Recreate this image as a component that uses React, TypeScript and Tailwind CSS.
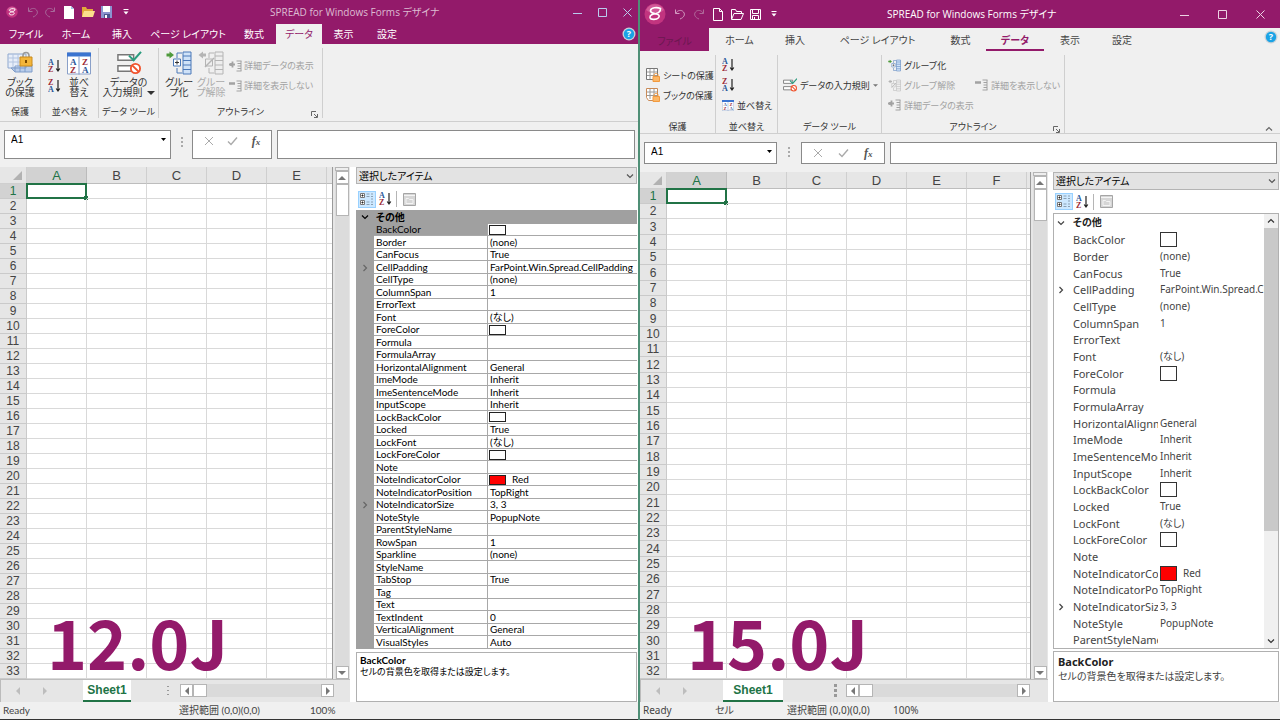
import type { ReactNode } from 'react';
import clsx from 'clsx';

type Property = { name: string; value?: string; color?: string; expandable?: boolean };

const properties: Property[] = [
  { name: 'BackColor', color: '#ffffff' },
  { name: 'Border', value: '(none)' },
  { name: 'CanFocus', value: 'True' },
  { name: 'CellPadding', value: 'FarPoint.Win.Spread.CellPadding', expandable: true },
  { name: 'CellType', value: '(none)' },
  { name: 'ColumnSpan', value: '1' },
  { name: 'ErrorText' },
  { name: 'Font', value: '(なし)' },
  { name: 'ForeColor', color: '#ffffff' },
  { name: 'Formula' },
  { name: 'FormulaArray' },
  { name: 'HorizontalAlignment', value: 'General' },
  { name: 'ImeMode', value: 'Inherit' },
  { name: 'ImeSentenceMode', value: 'Inherit' },
  { name: 'InputScope', value: 'Inherit' },
  { name: 'LockBackColor', color: '#ffffff' },
  { name: 'Locked', value: 'True' },
  { name: 'LockFont', value: '(なし)' },
  { name: 'LockForeColor', color: '#ffffff' },
  { name: 'Note' },
  { name: 'NoteIndicatorColor', value: 'Red', color: '#ff0000' },
  { name: 'NoteIndicatorPosition', value: 'TopRight' },
  { name: 'NoteIndicatorSize', value: '3, 3', expandable: true },
  { name: 'NoteStyle', value: 'PopupNote' },
  { name: 'ParentStyleName' },
  { name: 'RowSpan', value: '1' },
  { name: 'Sparkline', value: '(none)' },
  { name: 'StyleName' },
  { name: 'TabStop', value: 'True' },
  { name: 'Tag' },
  { name: 'Text' },
  { name: 'TextIndent', value: '0' },
  { name: 'VerticalAlignment', value: 'General' },
  { name: 'VisualStyles', value: 'Auto' },
];

/* ---------- icons ---------- */

function Logo({ className }: { className: string }) {
  return (
    <svg className={className} viewBox="0 0 22 22" fill="none">
      <circle cx="11" cy="11" r="10.5" fill="#c2347f" />
      <path d="M2 7a10 10 0 0 1 18 0c-5 4-12 5-18 0Z" fill="#d76aa3" opacity=".7" />
      <path
        d="M16.500 5.500C13 4 7 4.500 6.500 7.500c-.3 2.500 3 3 6 3.500 2.500.5 3.500 2 2 3.800-2 2.200-8 2.200-8.500-.3-.4-2.300 3-3.500 6-4 2.500-.5 4.500-2 4.500-5Z"
        stroke="#fff"
        strokeWidth="1.6"
      />
    </svg>
  );
}

function UndoIcon({ redo, className }: { redo?: boolean; className: string }) {
  return (
    <svg className={clsx('h-3 w-3', className)} viewBox="0 0 12 12" fill="none" stroke="currentColor">
      {redo ? (
        <path d="M10.500 1.500v4h-4M10.200 5.300C8.500 2 4.500 1.500 2.500 4s-.5 5.500 3.500 7" />
      ) : (
        <path d="M1.500 1.500v4h4M1.800 5.300C3.500 2 7.500 1.500 9.500 4s.5 5.500-3.500 7" />
      )}
    </svg>
  );
}

function MenuCaret({ className }: { className: string }) {
  return (
    <svg className={className} width="6" height="6" viewBox="0 0 6 6" fill="currentColor">
      <path d="M0.500 0h5v1h-5zM0.500 2.500h5L3 5.500z" />
    </svg>
  );
}

function SortIcon({ desc }: { desc?: boolean }) {
  return (
    <svg className="h-[14px] w-[13px] shrink-0" viewBox="0 0 13 14">
      <g fontFamily="Liberation Serif, serif" fontSize="8" fontWeight="700">
        <text x="0" y="6" fill={desc ? '#9c2a35' : '#2a5699'}>{desc ? 'Z' : 'A'}</text>
        <text x="0" y="13" fill={desc ? '#2a5699' : '#9c2a35'}>{desc ? 'A' : 'Z'}</text>
      </g>
      <path d="M10 1v10.500M8.200 9.500 10 12l1.800-2.500" stroke="#222" strokeWidth="1.200" fill="none" />
    </svg>
  );
}

function SortDialogIcon({ className }: { className: string }) {
  return (
    <svg className={clsx('shrink-0', className)} viewBox="0 0 24 22">
      <path d="M.5.5h23v21H.5z" fill="#fff" stroke="#8aa0c8" />
      <path d="M0 0h24v4H0z" fill="#3b74d0" />
      <path d="M12 4v18" stroke="#7c98c8" />
      <g fontFamily="Liberation Serif, serif" fontSize="9" fontWeight="700">
        <text x="3" y="12" fill="#2a5699">A</text>
        <text x="3" y="20" fill="#9c2a35">Z</text>
        <text x="15" y="12" fill="#9c2a35">Z</text>
        <text x="15" y="20" fill="#2a5699">A</text>
      </g>
    </svg>
  );
}

function BookLockIcon() {
  return (
    <svg className="h-6 w-7" viewBox="0 0 28 24" fill="none">
      <path d="M2 3h18v14H2z" fill="#e7eef9" stroke="#8fa8cf" />
      <path d="M2 7h18M2 11h18M7 3v14M12 3v14" stroke="#b3c4e0" />
      <path d="M5 17l4 4h17v-8H20v4z" fill="#b9cdea" stroke="#7f9cc9" />
      <path d="M9 21v-6h17M14 15v6M19 15v6" stroke="#7f9cc9" />
      <path d="M17 7V4.500c0-4 6-4 6 0V7" stroke="#9a9a9a" strokeWidth="1.600" />
      <path d="M14 6h12v9H14z" fill="#f3b53a" stroke="#c98a1d" />
      <path d="M20 9v3" stroke="#7a4a00" strokeWidth="2" />
    </svg>
  );
}

function SheetLockIcon({ book }: { book?: boolean }) {
  return (
    <svg className="h-[14px] w-[14px] shrink-0" viewBox="0 0 14 14" fill="none">
      <path d={book ? 'M.5.5h11v9l-2 3h-7l-2-3z' : 'M.5.500h11v11H.5z'} fill="#fff" stroke={book ? '#c98b58' : '#777'} />
      <path d="M1 4h10M1 7.500h10M4 1v10M8 1v10" stroke="#999" />
      <path d="M8 8.500V7c0-2 4-2 4 0v1.500" stroke="#f29a3f" />
      <path d="M7 8.500h6.500v5H7z" fill="#fbb768" stroke="#f29a3f" />
    </svg>
  );
}

function ValidationIcon({ className }: { className: string }) {
  return (
    <svg className={clsx('shrink-0', className)} viewBox="0 0 26 26" fill="none">
      <path d="M1 4h17v6H1zM1 16h15v6H1z" fill="#fff" stroke="#777" strokeWidth="1.600" />
      <path d="M13 5l5 5 8-9" stroke="#2a9c7e" strokeWidth="2.200" />
      <circle cx="20" cy="19" r="5" fill="#fff" stroke="#f0532d" strokeWidth="2" />
      <path d="M16.500 15.500l7 7" stroke="#f0532d" strokeWidth="2" />
    </svg>
  );
}

function GroupIcon({ ungroup, className }: { ungroup?: boolean; className: string }) {
  const line = ungroup ? '#b4b4b4' : '#4a78b8';
  return (
    <svg className={clsx('shrink-0', className)} viewBox="0 0 26 24" fill="none">
      <path d="M17 1h8v22h-8zM17 5h8M17 9.500h8M17 14h8M17 18.500h8" fill={ungroup ? '#eee' : '#cfe2f8'} stroke={line} />
      <path d="M16 2h-5v5M16 22h-5v-5" stroke={line} />
      <path d="M7.500 8h7v7h-7z" fill={ungroup ? '#eee' : '#fff'} stroke={line} />
      {ungroup ? <path d="M7 16l9-9" stroke={line} strokeWidth="1.500" /> : <path d="M11 9.500v4M9 11.500h4" stroke="#333" />}
      {ungroup ? (
        <path d="M8 2.500H5V.500L.5 4 5 7.500v-2h3z" fill="#b4b4b4" />
      ) : (
        <path d="M.5 2.500h3V.500L8 4 3.500 7.500v-2h-3z" fill="#4f9a3c" />
      )}
    </svg>
  );
}

function DetailIcon({ hide }: { hide?: boolean }) {
  return (
    <svg className="h-3 w-[13px] shrink-0" viewBox="0 0 13 12" fill="none" stroke="#a2a2a2">
      <path d="M7.500 1h5M8.500 3.500h3.500M8.500 6h3.500M8.500 8.500h3.500M7.500 11h5M12 1v10" />
      {hide ? <path d="M0 3.500h6" strokeWidth="2.500" /> : <path d="M0 4.500h6M3.500 1.500v6M2 3v3" strokeWidth="1.800" />}
    </svg>
  );
}

function LauncherIcon() {
  return (
    <svg className="h-[7px] w-[7px]" viewBox="0 0 7 7" fill="none" stroke="#666">
      <path d="M.5 5V.500H5M3 3l3 3M6.500 3v3.500H3" />
    </svg>
  );
}

function HelpIcon() {
  return (
    <svg className="h-[14px] w-[14px]" viewBox="0 0 14 14">
      <circle cx="7" cy="7" r="6.500" fill="#c9d2d8" />
      <circle cx="7" cy="7" r="5.200" fill="#1aa3e6" />
      <text x="7" y="10.300" fontSize="9" fontWeight="700" fill="#fff" textAnchor="middle" fontFamily="Open Sans, sans-serif">?</text>
    </svg>
  );
}

function WindowControls({ className, gap }: { className: string; gap: string }) {
  return (
    <div className={clsx('flex items-center', className, gap)}>
      <button aria-label="最小化">
        <svg width="9" height="9" viewBox="0 0 9 9" stroke="currentColor"><path d="M0 5.500h9" /></svg>
      </button>
      <button aria-label="最大化">
        <svg width="9" height="9" viewBox="0 0 9 9" fill="none" stroke="currentColor"><path d="M.5.500h8v8h-8z" /></svg>
      </button>
      <button aria-label="閉じる">
        <svg width="9" height="9" viewBox="0 0 9 9" stroke="currentColor"><path d="M.5.500l8 8M8.500.500l-8 8" /></svg>
      </button>
    </div>
  );
}

function Chevron({ dir, className }: { dir: 'down' | 'right' | 'up'; className?: string }) {
  const d = { down: 'M1 2.500l3 3 3-3', right: 'M2.500 1l3 3-3 3', up: 'M1 5.500l3-3 3 3' }[dir];
  return (
    <svg className={clsx('h-2 w-2', className)} viewBox="0 0 8 8" fill="none" stroke="currentColor" strokeWidth="1.200">
      <path d={d} />
    </svg>
  );
}

function Triangle({ dir, className }: { dir: 'up' | 'down' | 'left' | 'right'; className?: string }) {
  const d = { up: 'M0 6l4-4 4 4z', down: 'M0 2l4 4 4-4z', left: 'M6 0L2 4l4 4z', right: 'M2 0l4 4-4 4z' }[dir];
  return (
    <svg className={clsx('h-2 w-2', className)} viewBox="0 0 8 8" fill="currentColor">
      <path d={d} />
    </svg>
  );
}

/* ---------- shared parts ---------- */

function RibbonGroup({ label, width, launcher, children }: { label: string; width: string; launcher?: boolean; children: ReactNode }) {
  return (
    <section className={clsx('relative flex flex-col border-r border-[#cfcfcf]', width)}>
      <div className="flex-1">{children}</div>
      <h3 className="text-center text-[9px] leading-3 text-[#333]">{label}</h3>
      {launcher && (
        <button aria-label="オプション" className="absolute right-1 bottom-0">
          <LauncherIcon />
        </button>
      )}
    </section>
  );
}

type FormulaBarProps = { className: string; boxHeight: string; nameWidth: string; dots: string; tools: string };

function FormulaBar({ className, boxHeight, nameWidth, dots, tools }: FormulaBarProps) {
  const box = 'border border-[#8a8a8a] bg-white';
  return (
    <div className={clsx('flex items-start pr-[3px] pl-1', className)}>
      <div className={clsx('flex items-start px-1', box, boxHeight, nameWidth)}>
        <input aria-label="名前ボックス" defaultValue="A1" className="h-4 w-full min-w-0 pl-0.5 font-['Liberation_Sans',sans-serif] text-[10px] text-black outline-none" />
        <button aria-label="一覧" className="flex h-4 items-center">
          <svg width="5" height="3" viewBox="0 0 5 3"><path d="M0 0h5L2.500 3z" /></svg>
        </button>
      </div>
      <div className={clsx('flex items-center justify-center text-[#aaa]', dots)}>
        <svg width="2" height="12" viewBox="0 0 2 12" fill="currentColor"><path d="M0 1h2v2H0zM0 5h2v2H0zM0 9h2v2H0z" /></svg>
      </div>
      <div className={clsx('flex items-start justify-around px-1 pt-1', box, boxHeight, tools)}>
        <button aria-label="キャンセル" className="text-[#aaa]">
          <svg width="10" height="12" viewBox="0 0 10 12" stroke="currentColor"><path d="M1 2l8 8M9 2l-8 8" /></svg>
        </button>
        <button aria-label="入力" className="text-[#aaa]">
          <svg width="11" height="12" viewBox="0 0 11 12" fill="none" stroke="currentColor" strokeWidth="1.400"><path d="M1 6.500l3 3 6-7" /></svg>
        </button>
        <button aria-label="関数の挿入" className="font-['Liberation_Serif',serif] text-[12px] leading-3 font-bold text-[#555] italic">
          f<span className="text-[9px]">x</span>
        </button>
      </div>
      <input aria-label="数式バー" className={clsx('ml-[5px] min-w-0 flex-1 outline-none', box, boxHeight)} />
    </div>
  );
}

function Sheet({ columns, rows, rowHeights, caption }: { columns: string[]; rows: number; rowHeights: string; caption: string }) {
  return (
    <div className="relative min-w-0 flex-1 border-r border-[#9a9a9a] bg-white">
      <table className="w-full table-fixed border-separate border-spacing-0 font-['Liberation_Sans',sans-serif] leading-none text-[#444]">
        <colgroup>
          <col className="w-[27px]" />
          {columns.map((c) => (
            <col key={c} className="w-[60px]" />
          ))}
          <col />
        </colgroup>
        <thead>
          <tr className="h-[17px] bg-[#e6e6e6]">
            <th className="border-r border-b border-[#cfcfcf] p-0">
              <svg className="mr-1 ml-auto h-[9px] w-[9px]" viewBox="0 0 9 9" fill="#b2b2b2"><path d="M9 0v9H0z" /></svg>
            </th>
            {columns.map((c, i) => (
              <th
                key={c}
                className={clsx('border-r border-b p-0 text-[13px] font-normal', i === 0 ? 'border-[#217346] border-r-[#bbb] bg-[#d2d2d2] text-[#217346]' : 'border-[#bdbdbd] border-r-[#cfcfcf]')}
              >
                {c}
              </th>
            ))}
            <th className="border-b border-[#bdbdbd] p-0" />
          </tr>
        </thead>
        <tbody className={rowHeights}>
          {Array.from({ length: rows }, (_, r) => (
            <tr key={r}>
              <th className={clsx('border-r border-b border-[#cacaca] p-0 text-[12px] font-normal', r === 0 ? 'bg-[#d2d2d2] text-[#217346]' : 'bg-[#e6e6e6]')}>
                {r + 1}
              </th>
              {columns.map((c, i) => (
                <td key={c} className="relative border-r border-b border-[#d9d9d9] p-0">
                  {r === 0 && i === 0 && (
                    <div className="absolute -inset-px border-2 border-[#217346]">
                      <span className="absolute -right-[3px] -bottom-[3px] h-1 w-1 bg-[#217346]" />
                    </div>
                  )}
                </td>
              ))}
              <td className="border-b border-[#d9d9d9] p-0" />
            </tr>
          ))}
        </tbody>
      </table>
      <p className="absolute bottom-1 left-[47px] font-['Noto_Sans_CJK_JP',sans-serif] text-[68px] leading-none font-bold text-[#931a6a]">
        {caption}
      </p>
    </div>
  );
}

const scrollButton = 'flex h-[13px] w-[13px] shrink-0 items-center justify-center border border-[#b5b5b5] bg-white text-[#777]';

function VerticalScroll() {
  return (
    <div className="mr-px ml-0.5 flex w-[14px] flex-col items-center bg-[#dcdcdc]">
      <div className="h-1 w-full border border-[#b5b5b5] bg-[#eee]" />
      <button aria-label="上へ" className={scrollButton}><Triangle dir="up" className="h-1.5" /></button>
      <div className="h-8 w-[13px] border border-[#b5b5b5] bg-white" />
      <button aria-label="下へ" className={clsx('mt-auto', scrollButton)}><Triangle dir="down" className="h-1.5" /></button>
    </div>
  );
}

function SheetTabs({ tabWidth, dots, className }: { tabWidth: string; dots: ReactNode; className: string }) {
  return (
    <div className="flex h-[23px] items-start border-t border-[#bdbdbd] bg-[#e6e6e6]">
      <div className="flex h-full w-[83px] items-center gap-[19px] border-l border-[#bbb] pl-[13px] text-[#bdbdbd]">
        <button aria-label="前のシート"><Triangle dir="left" /></button>
        <button aria-label="次のシート"><Triangle dir="right" /></button>
      </div>
      <button className={clsx("h-[22px] border-b-2 border-[#217346] bg-white font-['Liberation_Sans',sans-serif] text-[12px] font-bold text-[#217346]", tabWidth)}>
        Sheet1
      </button>
      {dots}
      <div className={clsx('mt-1 flex flex-1 bg-[#dadada]', className)}>
        <button aria-label="左へ" className={scrollButton}><Triangle dir="left" /></button>
        <div className="h-[13px] w-[14px] border border-[#b5b5b5] bg-white" />
        <button aria-label="右へ" className={clsx('ml-auto', scrollButton)}><Triangle dir="right" /></button>
      </div>
    </div>
  );
}

function ItemSelect({ height }: { height: string }) {
  return (
    <div className={clsx('relative', height)}>
      <select aria-label="アイテム" className={clsx('block w-full appearance-none border border-[#b4b4b4] bg-[#e3e3e3] pl-0.5 text-[10px] leading-none text-black', height)}>
        <option>選択したアイテム</option>
      </select>
      <Chevron dir="down" className="pointer-events-none absolute top-[5px] right-[3px] text-[#555]" />
    </div>
  );
}

function PropertyToolbar({ className }: { className: string }) {
  return (
    <div className={clsx('flex items-center pl-0.5', className)}>
      <button aria-label="項目別" className="flex h-[17px] w-[18px] items-center justify-center border border-[#99d1ff] bg-[#cce8ff]">
        <svg width="14" height="13" viewBox="0 0 14 13" fill="none" stroke="#777">
          <path d="M.5.500h4v4h-4zM.5 7.500h4v4h-4z" fill="#fff" />
          <path d="M1.500 2.500h2M1.500 9.500h2M2.500 1.500v2M2.500 8.500v2" stroke="#222" />
          <path d="M6.500 1h3M6.500 3.500h3M6.500 9h3M6.500 11.500h3M11 1h2M11 3.500h2M11 6h2M11 9h2M11 11.500h2" stroke="#8aa0b4" />
        </svg>
      </button>
      <button aria-label="アルファベット順" className="ml-[3px]"><SortIcon /></button>
      <div className="ml-1 h-4 w-px bg-[#b5b5b5]" />
      <button aria-label="プロパティ ページ" className="ml-1.5" disabled>
        <svg width="13" height="13" viewBox="0 0 13 13" fill="none" stroke="#a5a5a5">
          <path d="M.5.500h12v12H.5z" fill="#d6d6d6" />
          <path d="M1 2.500h11M3 5.500h2.500l1 1H10v4H3z" stroke="#f4f4f4" />
        </svg>
      </button>
    </div>
  );
}

/* ---------- version 12 ---------- */

const classicTabs = [
  ['ファイル', 'w-[52px]'],
  ['ホーム', 'w-12'],
  ['挿入', 'w-11'],
  ['ページ レイアウト', 'w-[88px]'],
  ['数式', 'w-11'],
  ['データ', 'w-[46px]'],
  ['表示', 'w-[43px]'],
  ['設定', 'w-11'],
];

function ClassicWindow() {
  const big = 'flex flex-col items-center gap-0.5 text-center text-[10px] leading-[10px] text-[#333]';
  return (
    <main className="flex min-w-0 flex-col border-r-2 border-[#4f8f76] bg-[#f0f0f0] font-[Lato,'Noto_Sans_CJK_JP',sans-serif] [font-variant-ligatures:no-common-ligatures]">
      <header className="bg-[#931a6a] text-white">
        <div className="relative flex h-6 items-center pl-1.5">
          <Logo className="h-3 w-3" />
          <button aria-label="元に戻す" className="ml-[9px]"><UndoIcon className="text-[#a8699a]" /></button>
          <button aria-label="やり直し" className="ml-[5px]"><UndoIcon redo className="text-[#a8699a]" /></button>
          <button aria-label="新規" className="ml-2">
            <svg width="10" height="13" viewBox="0 0 10 13" fill="#fff"><path d="M0 0h7l3 3v10H0z" /><path d="M7 0v3h3z" fill="#9fc6e8" /></svg>
          </button>
          <button aria-label="開く" className="ml-2">
            <svg width="13" height="12" viewBox="0 0 13 12"><path d="M0 1h4l1 2h6v8H0z" fill="#e2a93b" /><path d="M2 5h11l-2 6H0z" fill="#fbdf8d" /></svg>
          </button>
          <button aria-label="保存" className="ml-1.5">
            <svg width="11" height="12" viewBox="0 0 11 12"><path d="M0 0h11v12H0z" fill="#8b94cf" /><path d="M2 0h7v6H2z" fill="#fff" /><path d="M3 8h6v4H3z" fill="#4b568f" /><path d="M4 9h2v3H4z" fill="#fff" /></svg>
          </button>
          <MenuCaret className="ml-[11px] text-white" />
          <h1 className="absolute left-[270px] font-['Open_Sans','Noto_Sans_CJK_JP',sans-serif] text-[10px] text-[#ddbcd2]">
            SPREAD for Windows Forms デザイナ
          </h1>
          <WindowControls className="ml-auto pr-1.5 text-[#b9cbee]" gap="gap-4" />
        </div>
        <nav className="flex h-5 items-stretch text-[10px]">
          {classicTabs.map(([label, width]) => (
            <button key={label} className={clsx('leading-none', width, label === 'データ' ? 'bg-[#f0f0f0] text-[#931a6a]' : 'text-white')}>
              {label}
            </button>
          ))}
          <button aria-label="ヘルプ" className="mr-0.5 ml-auto"><HelpIcon /></button>
        </nav>
      </header>

      <div className="flex h-[78px] border-b border-[#cfcfcf] pt-1 pb-[3px]">
        <RibbonGroup label="保護" width="w-[41px]">
          <button className={clsx('mx-auto pt-[3px]', big)}>
            <BookLockIcon />
            <span>ブック<br />の保護</span>
          </button>
        </RibbonGroup>
        <RibbonGroup label="並べ替え" width="w-[58px]">
          <div className="flex justify-center gap-1.5">
            <div className="flex flex-col gap-1.5 pt-[11px]">
              <button aria-label="昇順"><SortIcon /></button>
              <button aria-label="降順"><SortIcon desc /></button>
            </div>
            <button className={clsx('pt-1', big)}>
              <SortDialogIcon className="h-[23px] w-6" />
              <span>並べ<br />替え</span>
            </button>
          </div>
        </RibbonGroup>
        <RibbonGroup label="データ ツール" width="w-[60px]">
          <button className={clsx('mx-auto pt-[3px]', big)}>
            <ValidationIcon className="h-6 w-[26px]" />
            <span className="whitespace-nowrap">
              データの<br />入力規則<Triangle dir="down" className="ml-1 inline-block h-1 w-1" />
            </span>
          </button>
        </RibbonGroup>
        <RibbonGroup label="アウトライン" width="w-[164px]" launcher>
          <div className="flex pl-1.5">
            <button className={clsx('w-7 pt-[3px]', big)}>
              <GroupIcon className="h-6 w-[26px]" />
              <span className="whitespace-nowrap">グルー<br />プ化</span>
            </button>
            <button className={clsx('ml-1 w-7 pt-[3px]', big)} disabled>
              <GroupIcon ungroup className="h-6 w-[26px]" />
              <span className="whitespace-nowrap text-[#ababab]">グルー<br />プ解除</span>
            </button>
            <div className="ml-1 flex flex-col gap-2 pt-3 text-[9px] leading-3 whitespace-nowrap text-[#a2a2a2]">
              <button className="flex items-center gap-0.5" disabled><DetailIcon />詳細データの表示</button>
              <button className="flex items-center gap-0.5" disabled><DetailIcon hide />詳細を表示しない</button>
            </div>
          </div>
        </RibbonGroup>
      </div>

      <FormulaBar className="h-[45px] pt-2" boxHeight="h-[29px]" nameWidth="w-[167px]" dots="h-6 w-[21px]" tools="w-20" />

      <div className="flex flex-1">
        <div className="flex min-w-0 flex-1 flex-col bg-[#e6e6e6]">
          <div className="flex flex-1">
            <Sheet columns={['A', 'B', 'C', 'D', 'E']} rows={33} rowHeights="[&>tr]:h-[15px]" caption="12.0J" />
            <VerticalScroll />
          </div>
          <SheetTabs
            tabWidth="w-12"
            dots={<svg className="mt-1 mr-[11px] ml-9" width="2" height="14" viewBox="0 0 2 14" fill="#999"><path d="M0 2h2v1H0zM0 6h2v1H0zM0 10h2v1H0z" /></svg>}
            className="mr-4"
          />
        </div>
        <aside className="flex w-[288px] flex-col bg-white pr-px pl-1.5">
          <ItemSelect height="h-[17px]" />
          <PropertyToolbar className="h-[26px] pt-1" />
          <table className="w-full table-fixed border-separate border-spacing-0 text-left text-[10px] leading-[11px] text-black">
            <colgroup>
              <col className="w-[18px]" />
              <col className="w-[114px]" />
              <col />
            </colgroup>
            <thead>
              <tr className="h-[14px] bg-[#a0a0a0]">
                <th className="p-0"><Chevron dir="down" className="mx-auto" /></th>
                <th colSpan={2} className="p-0 pl-0.5 font-bold">その他</th>
              </tr>
            </thead>
            <tbody className="[&>tr:nth-child(even)]:h-[13px] [&>tr:nth-child(odd)]:h-3">
              {properties.map((p, i) => (
                <tr key={p.name}>
                  <td className="bg-[#a0a0a0] p-0 text-[#666]">{p.expandable && <Chevron dir="right" className="mx-auto" />}</td>
                  <th className={clsx('overflow-hidden border-r border-b border-[#a8a8a8] p-0 pl-0.5 font-normal', i === 0 && 'bg-[#a0a0a0]')}>{p.name}</th>
                  <td className="overflow-hidden border-b border-[#a8a8a8] p-0 pl-0.5 whitespace-nowrap">
                    <span className="flex items-center">
                      {p.color && <i className="mr-1.5 -ml-px h-[10px] w-[17px] border border-[#222]" style={{ background: p.color }} />}
                      {p.value}
                    </span>
                  </td>
                </tr>
              ))}
            </tbody>
          </table>
          <div className="mt-[3px] flex-1 border border-[#b0b0b0] px-[3px] pt-px leading-[12px] text-black">
            <p className="text-[10px] font-bold">BackColor</p>
            <p className="text-[9px]">セルの背景色を取得または設定します。</p>
          </div>
        </aside>
      </div>

      <footer className="flex h-[18px] items-center border-b border-[#333] pl-[3px] text-[10px] text-[#444]">
        <span className="w-[176px]">Ready</span>
        <span className="w-[131px]">選択範囲 (0,0)(0,0)</span>
        <span>100%</span>
      </footer>
    </main>
  );
}

/* ---------- version 15 ---------- */

const modernTabs = [
  ['ファイル', 'w-[69px]'],
  ['ホーム', 'w-[61px]'],
  ['挿入', 'w-[50px]'],
  ['ページ レイアウト', 'w-[115px]'],
  ['数式', 'w-[51px]'],
  ['データ', 'w-[58px]'],
  ['表示', 'w-[52px]'],
  ['設定', 'w-[52px]'],
];

function ModernWindow() {
  const item = 'flex h-5 items-center gap-[3px] whitespace-nowrap text-[9px] leading-none';
  return (
    <main className="flex min-w-0 flex-col bg-[#f0f0f0] font-['Noto_Sans','Noto_Sans_CJK_JP',sans-serif]">
      <header>
        <div className="relative flex h-7 items-center bg-[#931a6a] pl-1 text-white">
          <Logo className="h-[22px] w-[22px]" />
          <button aria-label="元に戻す" className="ml-2"><UndoIcon className="text-[#d29bc0]" /></button>
          <button aria-label="やり直し" className="ml-[7px]"><UndoIcon redo className="text-[#b0699a]" /></button>
          <button aria-label="新規" className="ml-2">
            <svg width="10" height="13" viewBox="0 0 10 13" fill="none" stroke="#fff"><path d="M.5.500h6l3 3v9h-9zM6.500.500v3h3" /></svg>
          </button>
          <button aria-label="開く" className="ml-2">
            <svg width="13" height="11" viewBox="0 0 13 11" fill="none" stroke="#fff"><path d="M.5 10V.500h4l1 2h5v2M.5 10.500l2.500-6h9.500l-2.500 6z" /></svg>
          </button>
          <button aria-label="保存" className="ml-1.5">
            <svg width="11" height="11" viewBox="0 0 11 11" fill="none" stroke="#fff"><path d="M.5.500h10v10H.5zM2.500.500v4h6v-4M2.500 10.500v-4h6v4M4.500 8v2.500" /></svg>
          </button>
          <MenuCaret className="ml-2.5 text-white" />
          <h1 className="absolute left-[247px] font-['Open_Sans','Noto_Sans_CJK_JP',sans-serif] text-[10px]">SPREAD for Windows Forms デザイナ</h1>
          <WindowControls className="ml-auto pr-[15px] text-[#ecd3e3]" gap="gap-[29px]" />
        </div>
        <nav className="flex h-[23px] items-stretch text-[10px]">
          {modernTabs.map(([label, width]) => (
            <button
              key={label}
              className={clsx(
                'leading-none',
                width,
                label === 'ファイル' ? 'bg-[#931a6a] pt-0.5 text-[#6b1850]' : 'border-b-2 pt-0.5',
                label === 'データ' && 'border-[#931a6a] font-bold text-[#931a6a]',
                label !== 'ファイル' && label !== 'データ' && 'border-transparent text-[#444]',
              )}
            >
              {label}
            </button>
          ))}
          <button aria-label="ヘルプ" className="mr-0.5 ml-auto self-start pt-0.5"><HelpIcon /></button>
        </nav>
      </header>

      <div className="flex h-[83px] border-b border-[#cfcfcf] pt-1 text-[#333]">
        <RibbonGroup label="保護" width="w-[76px]">
          <div className="flex flex-col pt-2.5 pl-1.5">
            <button className={item}><SheetLockIcon />シートの保護</button>
            <button className={item}><SheetLockIcon book />ブックの保護</button>
          </div>
        </RibbonGroup>
        <RibbonGroup label="並べ替え" width="w-[62px]">
          <div className="flex flex-col pl-1.5">
            <button aria-label="昇順" className={item}><SortIcon /></button>
            <button aria-label="降順" className={item}><SortIcon desc /></button>
            <button className={item}><SortDialogIcon className="h-[11px] w-3" />並べ替え</button>
          </div>
        </RibbonGroup>
        <RibbonGroup label="データ ツール" width="w-[104px]">
          <button className={clsx('mt-5 pl-[5px]', item)}>
            <ValidationIcon className="h-[14px] w-[14px]" />
            データの入力規則
            <Triangle dir="down" className="h-[5px] w-[5px] shrink-0 text-[#777]" />
          </button>
        </RibbonGroup>
        <RibbonGroup label="アウトライン" width="w-[183px]" launcher>
          <div className="flex pl-1.5">
            <div className="flex w-[87px] flex-col">
              <button className={item}><GroupIcon className="h-[13px] w-[13px]" />グループ化</button>
              <button className={clsx('text-[#a2a2a2]', item)} disabled><GroupIcon ungroup className="h-[13px] w-[13px]" />グループ解除</button>
              <button className={clsx('text-[#a2a2a2]', item)} disabled><DetailIcon />詳細データの表示</button>
            </div>
            <button className={clsx('mt-5 text-[#a2a2a2]', item)} disabled><DetailIcon hide />詳細を表示しない</button>
          </div>
        </RibbonGroup>
        <button aria-label="リボンを折りたたむ" className="mr-[7px] ml-auto self-end text-[#666]"><Chevron dir="up" /></button>
      </div>

      <FormulaBar className="h-[38px] pt-2" boxHeight="h-[22px]" nameWidth="w-[133px]" dots="h-5 w-6" tools="w-[84px]" />

      <div className="flex flex-1">
        <div className="flex min-w-0 flex-1 flex-col bg-[#e6e6e6]">
          <div className="flex flex-1">
            <Sheet columns={['A', 'B', 'C', 'D', 'E', 'F']} rows={32} rowHeights="[&>tr]:h-[15px] [&>tr:nth-child(3n)]:h-4" caption="15.0J" />
            <VerticalScroll />
          </div>
          <SheetTabs
            tabWidth="w-[60px]"
            dots={<svg className="mt-1 mr-[9px] ml-[51px]" width="3" height="14" viewBox="0 0 3 14" fill="#999"><path d="M0 0h3v3H0zM0 5h3v3H0zM0 10h3v3H0z" /></svg>}
            className="mr-[18px]"
          />
        </div>
        <aside className="flex w-[232px] flex-col bg-white pr-px pl-[5px]">
          <ItemSelect height="h-[18px]" />
          <PropertyToolbar className="h-[23px]" />
          <div className="flex border border-[#b0b0b0]">
            <div className="min-w-0 flex-1">
              <table className="w-full table-fixed border-separate border-spacing-0 text-left text-[11px] leading-[15px] text-[#444]">
                <colgroup>
                  <col className="w-[19px]" />
                  <col className="w-[85px]" />
                  <col />
                </colgroup>
                <thead>
                  <tr className="h-[17px]">
                    <th className="p-0 pl-[3px]"><Chevron dir="down" /></th>
                    <th colSpan={2} className="p-0 text-[10px] text-[#222]">その他</th>
                  </tr>
                </thead>
                <tbody className="[&>tr]:h-[17px] [&>tr:nth-child(3n)]:h-4">
                  {properties.slice(0, 25).map((p) => (
                    <tr key={p.name}>
                      <td className="p-0 pl-[3px]">{p.expandable && <Chevron dir="right" />}</td>
                      <th className="overflow-hidden p-0 font-normal whitespace-nowrap">{p.name}</th>
                      <td className="overflow-hidden p-0 pl-0.5 text-[10px] whitespace-nowrap">
                        <span className="flex items-center">
                          {p.color && <i className="mr-1.5 h-[15px] w-[17px] shrink-0 border border-[#333]" style={{ background: p.color }} />}
                          {p.value}
                        </span>
                      </td>
                    </tr>
                  ))}
                </tbody>
              </table>
            </div>
            <div className="flex w-[14px] flex-col items-center bg-[#f0f0f0] text-[#333]">
              <button aria-label="上へ" className="flex h-[14px] items-center"><Chevron dir="up" /></button>
              <div className="h-[303px] w-full bg-[#c9c9c9]" />
              <button aria-label="下へ" className="mt-auto flex h-[14px] items-center"><Chevron dir="down" /></button>
            </div>
          </div>
          <div className="mt-0.5 flex-1 border border-[#b0b0b0] px-1 pt-0.5 leading-[15px] text-[#444]">
            <p className="text-[11px] font-bold text-[#222]">BackColor</p>
            <p className="text-[10px]">セルの背景色を取得または設定します。</p>
          </div>
        </aside>
      </div>

      <footer className="flex h-[18px] items-center border-b border-[#333] pl-[3px] text-[10px] text-[#444]">
        <span className="w-[72px]">Ready</span>
        <span className="w-[72px]">セル</span>
        <span className="w-[106px]">選択範囲 (0,0)(0,0)</span>
        <span>100%</span>
      </footer>
    </main>
  );
}

export default function App() {
  return (
    <div className="grid min-h-screen grid-cols-2 [font-feature-settings:'palt']">
      <ClassicWindow />
      <ModernWindow />
    </div>
  );
}
